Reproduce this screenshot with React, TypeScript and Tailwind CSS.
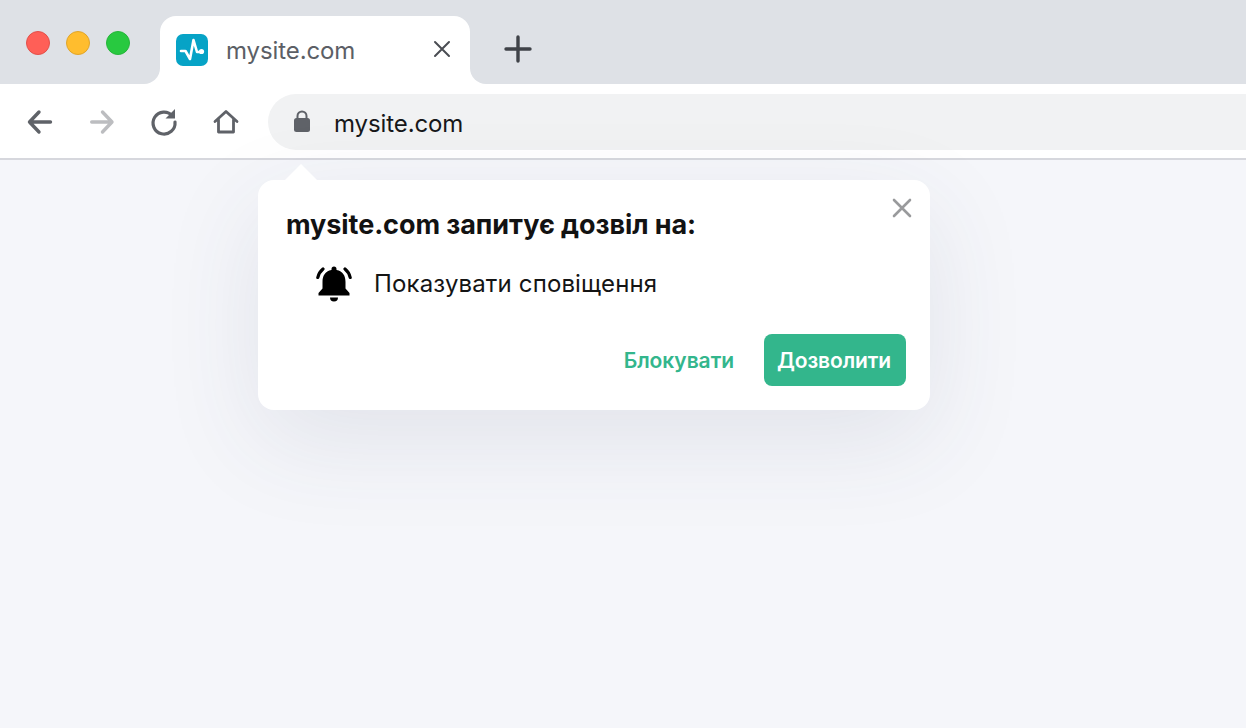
import React from "react";

const Ctl = ({ children }: { children: React.ReactNode }) => (
  <svg width="32" height="32" viewBox="0 0 32 32" fill="none" strokeLinecap="round" strokeLinejoin="round" className="block">
    {children}
  </svg>
);

export default function App() {
  return (
    <div className="relative flex h-screen w-full flex-col overflow-hidden bg-[#f5f6fa] font-['Inter',sans-serif]">
      <div className="flex h-[84px] shrink-0 bg-white">
        <div className="flex w-[160px] items-start gap-[16px] rounded-br-[16px] bg-[#dee1e6] pl-[26px] pt-[31px]">
          <span className="size-[24px] rounded-full border border-[#e2504a] bg-[#ff5f57]" />
          <span className="size-[24px] rounded-full border border-[#e0a52a] bg-[#ffbd2e]" />
          <span className="size-[24px] rounded-full border border-[#26b53a] bg-[#28c940]" />
        </div>
        <div className="w-[310px] bg-[#dee1e6] pt-[16px]">
          <div className="flex h-[68px] items-center rounded-t-[16px] bg-white pl-[16px] pr-[18px]">
            <svg width="32" height="32" viewBox="0 0 32 32" className="block">
              <rect width="32" height="32" rx="7" fill="#06a3c6" />
              <path d="M5 17h4.500L14 25l3.500-19 3.500 12h4" fill="none" stroke="#fff" strokeWidth="2.600" strokeLinecap="round" strokeLinejoin="round" />
              <circle cx="25.500" cy="17.500" r="2.600" fill="#fff" />
            </svg>
            <span className="ml-[18px] flex-1 pt-[2px] text-[24px] tracking-[-0.1px] text-[#5c5f66]">mysite.com</span>
            <svg width="20" height="20" viewBox="0 0 20 20" fill="none" stroke="#4a4d53" strokeWidth="2" strokeLinecap="round" className="mb-[2px]">
              <path d="M3 3l14 14M17 3L3 17" />
            </svg>
          </div>
        </div>
        <div className="flex flex-1 items-start rounded-bl-[16px] bg-[#dee1e6] pl-[34px] pt-[35px]">
          <svg width="28" height="28" viewBox="0 0 28 28" fill="none" stroke="#3f4248" strokeWidth="3.400" strokeLinecap="round">
            <path d="M14 2v24M2 14h24" />
          </svg>
        </div>
      </div>

      <div className="flex h-[76px] shrink-0 items-start border-b-2 border-[#d6d7dd] bg-white pl-[24px] pt-[10px]">
        <div className="mt-[11px] flex gap-[30px]">
          <Ctl>
            <path d="M26.500 17H5.500M15 7L5.500 17l9.500 10" stroke="#5f6268" strokeWidth="3.400" />
          </Ctl>
          <Ctl>
            <path d="M5.700 17h20M16.500 7l9.500 10-9.500 10" stroke="#bcbdc0" strokeWidth="3.400" />
          </Ctl>
          <Ctl>
            <path d="M24.500 11A11 11 0 1 0 27 17" stroke="#5f6268" strokeWidth="3.200" />
            <path d="M27 4v9.500h-9.500z" fill="#5f6268" strokeWidth="0" />
          </Ctl>
          <Ctl>
            <path d="M5 16.500L16 6.500l11 10M8.500 14.500V27h15V14.500" stroke="#5f6268" strokeWidth="2.800" />
          </Ctl>
        </div>
        <div className="ml-[26px] flex h-[56px] flex-1 items-center rounded-l-[28px] bg-[#f1f2f3] pl-[26px]">
          <svg width="16" height="22" viewBox="0 0 16 22" className="mb-[2px] block">
            <path d="M3.500 9V6a4.500 4.500 0 0 1 9 0v3" fill="none" stroke="#5f6268" strokeWidth="2" />
            <rect y="8" width="16" height="14" rx="2.500" fill="#5f6268" />
          </svg>
          <span className="ml-[24px] pt-[4px] text-[24px] tracking-[-0.1px] text-[#17181a]">mysite.com</span>
        </div>
      </div>

      <div className="absolute left-[258px] top-[180px] h-[230px] w-[672px] rounded-[16px] bg-white shadow-[0_30px_100px_rgba(60,70,100,0.1)]">
        <div className="absolute left-[27px] top-[-16px] h-0 w-0 border-x-[16px] border-b-[16px] border-x-transparent border-b-white" />
        <svg width="20" height="20" viewBox="0 0 20 20" fill="none" stroke="#999a9c" strokeWidth="2.600" strokeLinecap="round" className="absolute right-[18px] top-[18px]">
          <path d="M2 2l16 16M18 2L2 18" />
        </svg>
        <div className="flex h-full flex-col pl-[28px] pr-[24px] pt-[28px]">
          <h1 className="text-[27px] font-bold leading-[34px] tracking-[-0.07px] text-[#121212]">mysite.com запитує дозвіл на:</h1>
          <div className="mt-[24px] flex items-center pl-[30px]">
            <svg width="36" height="36" viewBox="0 0 36 36" className="block">
              <path d="M18 0.500a2.500 2.500 0 0 1 2.500 2.500v1C27 5 29.500 10 29.500 16v6.500l4 4.500v2.500H2.500V27l4-4.500V16C6.500 10 9 5 15.500 4V3A2.500 2.500 0 0 1 18 0.500zM14 31.500h8a4 4 0 0 1-8 0z" fill="#000" />
              <path d="M7 3A15 15 0 0 0 1.800 11.500M29 3a15 15 0 0 1 5.200 8.500" fill="none" stroke="#000" strokeWidth="3.200" strokeLinecap="round" />
            </svg>
            <span className="ml-[22px] text-[24px] leading-[36px] tracking-[0.14px] text-[#141414]">Показувати сповіщення</span>
          </div>
          <div className="mt-[32px] flex items-center justify-end">
            <button className="pt-[2px] text-[21px] font-semibold tracking-[-0.05px] text-[#33b68c]">Блокувати</button>
            <button className="ml-[30px] h-[52px] w-[142px] rounded-[8px] bg-[#33b68c] pr-[2px] pt-[2px] text-[21px] font-semibold tracking-[-0.1px] text-white">Дозволити</button>
          </div>
        </div>
      </div>
    </div>
  );
}
